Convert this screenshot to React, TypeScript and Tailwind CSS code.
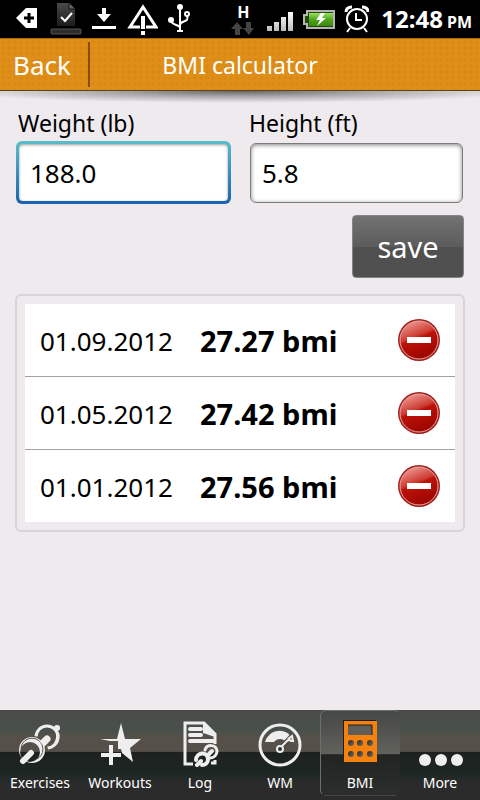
import React, { useState } from "react";

type Entry = {
    id: number;
    date: string;
    bmi: string;
};

type Tab = {
    name: string;
    icon: React.ReactNode;
};

const initialEntries: Entry[] = [
    { id: 1, date: "01.09.2012", bmi: "27.27" },
    { id: 2, date: "01.05.2012", bmi: "27.42" },
    { id: 3, date: "01.01.2012", bmi: "27.56" },
];

const StatusBar = () => (
    <div className="flex h-[38px] items-center justify-between bg-black pl-4 pr-2 text-white">
        <div className="flex items-center gap-2">
            <svg width="22" height="38" viewBox="0 0 22 38">
                <path d="M0 18 10 8h11v20H10z" fill="#fff" />
                <path d="M8 18h10M13 13v10" stroke="#000" strokeWidth="3" />
            </svg>
            <svg width="36" height="38" viewBox="0 0 36 38">
                <defs>
                    <linearGradient id="doc" x1="0" y1="0" x2="0" y2="1">
                        <stop offset="0" stopColor="#4a4a4a" />
                        <stop offset="1" stopColor="#1c1c1c" />
                    </linearGradient>
                </defs>
                <path d="M11 3h12l6 6v17H11z" fill="url(#doc)" />
                <path d="M23 3v6h6" fill="#666" stroke="#111" />
                <path d="m15 17 4 4 7-8" fill="none" stroke="#fff" strokeWidth="2" />
                <rect x="5" y="29" width="30" height="5" rx="1" fill="#2c2c2c" stroke="#555" />
            </svg>
            <svg width="28" height="38" viewBox="0 0 28 38">
                <path d="M12 8h4v6h5l-7 8-7-8h5zM2 26h24v3H2z" fill="#fff" />
            </svg>
            <svg width="32" height="38" viewBox="0 0 32 38">
                <path d="M17 7 30 27H4z" fill="none" stroke="#fff" strokeWidth="3" />
                <path d="M14 15h6v15h-6z" fill="#000" />
                <path d="M17 16v13M17 31v4" stroke="#fff" strokeWidth="4" />
            </svg>
            <svg width="26" height="38" viewBox="0 0 26 38">
                <g fill="none" stroke="#fff" strokeWidth="2">
                    <path d="M14 7v24M5 20c0 6 9 4 9 8M21 16c3 7-7 4-7 9" />
                    <circle cx="21" cy="14" r="2" />
                </g>
                <circle cx="14" cy="7" r="3" fill="#fff" />
                <circle cx="5" cy="20" r="3" fill="#fff" />
                <path d="M11 30h6v2h-6z" fill="#fff" />
            </svg>
        </div>
        <div className="flex items-center gap-2">
            <div className="flex w-6 flex-col items-center">
                <span className="text-base leading-5 font-bold">H</span>
                <svg width="24" height="14" viewBox="0 0 24 14">
                    <path d="M6 0 0 7h4v6h5V7h3zM15 0v6h-3l6 7 5-7h-3V0z" fill="#444" />
                </svg>
            </div>
            <svg width="30" height="38" viewBox="0 0 30 38">
                <defs>
                    <linearGradient id="signal" x1="0" y1="0" x2="0" y2="1">
                        <stop offset="0" stopColor="#fff" />
                        <stop offset="1" stopColor="#bbb" />
                    </linearGradient>
                </defs>
                <path d="M4 26h5v5H4zM11 22h5v9h-5zM18 17h5v14h-5zM25 12h5v19h-5z" fill="url(#signal)" />
            </svg>
            <svg width="34" height="38" viewBox="0 0 34 38">
                <defs>
                    <linearGradient id="battery" x1="0" y1="0" x2="0" y2="1">
                        <stop offset="0" stopColor="#9ade62" />
                        <stop offset="0.5" stopColor="#4fa51c" />
                        <stop offset="1" stopColor="#3c8810" />
                    </linearGradient>
                </defs>
                <path d="M6 11h27v17H6v-4H3v-9h3z" fill="#244c0c" stroke="#b5b5b5" strokeWidth="2" />
                <rect x="8" y="13" width="24" height="13" fill="url(#battery)" />
                <path d="M20 13l-5 7h4l-3 6 9-8h-4l3-5z" fill="#fff" />
            </svg>
            <svg width="26" height="38" viewBox="0 0 26 38">
                <g fill="none" stroke="#fff" strokeWidth="2">
                    <circle cx="14" cy="19" r="10" />
                    <path d="M13 13v7h6M7 28l-3 4M21 28l3 4" />
                    <path d="M3 12c0-3 2-5 6-5M25 12c0-3-2-5-6-5" strokeWidth="3" />
                </g>
            </svg>
            <div className="flex items-baseline gap-1 pl-1 font-bold">
                <span className="text-2xl leading-9">12:48</span>
                <span className="text-base">PM</span>
            </div>
        </div>
    </div>
);

const DeleteIcon = ({ id }: { id: number }) => (
    <svg width="44" height="44" viewBox="0 0 44 44" className="block">
        <defs>
            <linearGradient id={`red-${id}`} x1="0.2" y1="0" x2="0.6" y2="1">
                <stop offset="0" stopColor="#f0a09a" />
                <stop offset="0.42" stopColor="#cc3a30" />
                <stop offset="0.48" stopColor="#bc1208" />
                <stop offset="1" stopColor="#9c0500" />
            </linearGradient>
        </defs>
        <circle cx="22" cy="22" r="21" fill="#a01f1c" />
        <circle cx="22" cy="22" r="19" fill={`url(#red-${id})`} stroke="#e8a8a4" />
        <rect x="10" y="19" width="24" height="6" fill="#fff" />
    </svg>
);

const Dumbbell = ({ id }: { id: string }) => (
    <g fill="#eee">
        <mask id={id}>
            <rect x="-4" y="-4" width="60" height="60" fill="#fff" />
            <circle cx="17" cy="32" r="15" fill="#000" />
        </mask>
        <g mask={`url(#${id})`}>
            <circle cx="31" cy="18" r="11" fill="none" stroke="#eee" strokeWidth="3" />
            <path d="M43 13c2 8-3 16-11 17 5-3 9-9 8-15z" />
            <circle cx="41" cy="9" r="3" />
            <path d="m27 24 4-4" stroke="#eee" strokeWidth="7" strokeLinecap="round" />
        </g>
        <path
            fillRule="evenodd"
            d="M16 18a13 13 0 1 1 0 26a13 13 0 1 1 0-26zM14 23a10 10 0 1 0 0 20a10 10 0 1 0 0-20z"
        />
        <path d="M5 29a11 11 0 1 1 16 11" fill="none" stroke="#555" strokeWidth="1" />
        <path d="m26 25 3-3" stroke="#eee" strokeWidth="7" />
        <path d="m7 42 8-8" stroke="#eee" strokeWidth="6" strokeLinecap="round" />
    </g>
);

const ExercisesIcon = () => (
    <svg width="48" height="48" viewBox="0 0 48 48">
        <Dumbbell id="dumbbell-large" />
    </svg>
);

const WorkoutsIcon = () => (
    <svg width="48" height="48" viewBox="0 0 48 48">
        <path d="m25 4 4 16h16L34 29l3 14-11-9-1-4h-3v-8h-8L4 20h17z" fill="#eee" />
        <path d="M15 26v20M5 36h20" stroke="#eee" strokeWidth="4" />
    </svg>
);

const LogIcon = () => (
    <svg width="48" height="48" viewBox="0 0 48 48">
        <path d="M17 45H9V4h19l11 11v10" fill="none" stroke="#eee" strokeWidth="3" />
        <path d="M27 3v11l12 4v-3z" fill="#eee" />
        <path d="M14 10h11M14 16h11M14 22h23" stroke="#eee" strokeWidth="4" strokeLinecap="round" />
        <path d="M35 44h4v-3" fill="none" stroke="#eee" strokeWidth="3" />
        <g fill="none" stroke="#eee" strokeLinecap="round">
            <path d="M29 31c2-6 11-6 12 1 0 4-3 7-7 7" strokeWidth="3" />
            <path d="m32 36 4-4" strokeWidth="4" />
            <path d="M20 41c0-8 12-9 12-1 0 4-3 6-6 6" strokeWidth="4" />
            <path d="m21 46 4-4" strokeWidth="4" />
        </g>
    </svg>
);

const GaugeIcon = () => (
    <svg width="48" height="48" viewBox="0 0 48 48">
        <circle cx="24" cy="26" r="20" fill="none" stroke="#eee" strokeWidth="3" />
        <path d="M9 23c5-15 24-15 29 0h-8c-3-4-9-4-12 0z" fill="#eee" />
        <path d="m24 30 12-13" stroke="#4a4843" strokeWidth="5" />
        <path d="m25 28 9-9M32 20l4-3 1 5-5-1" stroke="#eee" strokeWidth="2" fill="none" />
        <circle cx="24" cy="30" r="3" fill="#333" stroke="#eee" strokeWidth="2" />
    </svg>
);

const CalculatorIcon = () => (
    <svg width="48" height="48" viewBox="0 0 48 48">
        <defs>
            <linearGradient id="key" x1="0" y1="0" x2="1" y2="1">
                <stop offset="0" stopColor="#2a2826" />
                <stop offset="1" stopColor="#706c64" />
            </linearGradient>
        </defs>
        <path d="M7 1h33v42H7z" fill="#201c18" />
        <path d="M8 2h33v41H8z" fill="#f5810f" />
        <rect x="12" y="6" width="24" height="10" fill="#5d5e5a" />
        <path d="M12 6h24v10" fill="none" stroke="#201c18" />
        {[24, 35].map((y) =>
            [15, 24, 34].map((x) => <circle key={`${x}-${y}`} cx={x} cy={y} r="3" fill="url(#key)" />)
        )}
    </svg>
);

const MoreIcon = () => (
    <svg width="48" height="48" viewBox="0 0 48 48" fill="#eee">
        <ellipse cx="9" cy="41" rx="6" ry="6" />
        <ellipse cx="25" cy="41" rx="6" ry="6" />
        <ellipse cx="41" cy="41" rx="6" ry="6" />
    </svg>
);

const tabs: Tab[] = [
    { name: "Exercises", icon: <ExercisesIcon /> },
    { name: "Workouts", icon: <WorkoutsIcon /> },
    { name: "Log", icon: <LogIcon /> },
    { name: "WM", icon: <GaugeIcon /> },
    { name: "BMI", icon: <CalculatorIcon /> },
    { name: "More", icon: <MoreIcon /> },
];

const App: React.FC = () => {
    const [weight, setWeight] = useState("188.0");
    const [height, setHeight] = useState("5.8");
    const [entries, setEntries] = useState(initialEntries);
    const [activeTab, setActiveTab] = useState("BMI");

    // weight in pounds, height in feet
    const handleSave = (e: React.FormEvent) => {
        e.preventDefault();
        const inches = parseFloat(height) * 12;
        const bmi = (parseFloat(weight) * 703) / (inches * inches);
        if (!isFinite(bmi)) return;
        const now = new Date();
        const day = String(now.getDate()).padStart(2, "0");
        const month = String(now.getMonth() + 1).padStart(2, "0");
        setEntries([{ id: now.getTime(), date: `${day}.${month}.${now.getFullYear()}`, bmi: bmi.toFixed(2) }, ...entries]);
    };

    return (
        <div className="flex min-h-screen flex-col bg-[#eeeaee] font-['Noto_Sans','Open_Sans',sans-serif] text-black">
            <StatusBar />
            <header className="grid h-[53px] grid-cols-[90px_1fr_90px] items-center border-t border-b border-t-[#a86708] border-b-[#5c4414] bg-[#df8f18] bg-[radial-gradient(#d88814_1px,transparent_2px)] bg-[size:6px_6px] text-white">
                <button type="button" className="h-[45px] border-r-2 border-[#8f4a08] pr-1 text-[26px] leading-8">
                    Back
                </button>
                <h1 className="text-center text-[23px] leading-8">BMI calculator</h1>
            </header>
            <div className="h-3 bg-[radial-gradient(60%_100%_at_50%_0%,#66636a,#aaa7ab_45%,#eeeaee)]" />

            <main className="flex-1 px-4 pt-1">
                <form onSubmit={handleSave}>
                    <div className="grid grid-cols-2 gap-[18px]">
                        <div>
                            <label htmlFor="weight" className="block pl-[2px] text-[23px] leading-8">
                                Weight (lb)
                            </label>
                            <div className="mt-[2px] rounded-md bg-linear-to-b from-[#5bbec8] to-[#1a62ae] p-[3px]">
                                <input
                                    id="weight"
                                    type="text"
                                    value={weight}
                                    onChange={(e) => setWeight(e.target.value)}
                                    className="block h-[57px] w-full rounded-sm bg-white px-[11px] text-[26px] shadow-[inset_0_1px_3px_rgba(0,0,0,0.4)] outline-none"
                                />
                            </div>
                        </div>
                        <div>
                            <label htmlFor="height" className="block text-[23px] leading-8">
                                Height (ft)
                            </label>
                            <div className="mt-1 px-px">
                                <input
                                    id="height"
                                    type="text"
                                    value={height}
                                    onChange={(e) => setHeight(e.target.value)}
                                    className="block h-[60px] w-full rounded-md border border-[#7c7c7c] bg-white px-[11px] text-[26px] shadow-[inset_0_1px_4px_rgba(0,0,0,0.5)] outline-none"
                                />
                            </div>
                        </div>
                    </div>
                    <div className="mt-[11px] flex justify-end">
                        <button
                            type="submit"
                            className="h-[63px] w-28 rounded-sm border border-[#858585] bg-linear-to-b from-[#737373] from-0% via-[#5c5c5c] via-50% to-[#505050] to-50% text-[29px] leading-8 text-white"
                        >
                            save
                        </button>
                    </div>
                </form>

                <div className="-mx-px mt-4 rounded-md border-2 border-[#d8d5d8] p-2">
                    <ul className="bg-white">
                        {entries.map((entry) => (
                            <li
                                key={entry.id}
                                className="flex h-[73px] items-center border-b border-[#a2a2a2] pr-[14px] pl-[15px] text-[26px] last:h-[72px] last:border-b-0"
                            >
                                <span className="w-40 pt-[2px]">{entry.date}</span>
                                <span className="flex-1 pt-px text-[29px] font-bold">{entry.bmi} bmi</span>
                                <button
                                    type="button"
                                    aria-label={`Delete ${entry.date}`}
                                    onClick={() => setEntries(entries.filter((item) => item.id !== entry.id))}
                                >
                                    <DeleteIcon id={entry.id} />
                                </button>
                            </li>
                        ))}
                    </ul>
                </div>
            </main>

            <nav className="grid h-[90px] grid-cols-6 bg-[linear-gradient(#4a4b49,#48504b_22%,#565049_30%,#56504a_46%,#1d211e_47%,#1c2724_70%,#2a2b2a_80%,#2b2b2b)] text-white">
                {tabs.map((tab) => (
                    <button
                        key={tab.name}
                        type="button"
                        onClick={() => setActiveTab(tab.name)}
                        className={`flex flex-col items-center pt-2 ${
                            activeTab === tab.name
                                ? "mb-2 rounded-md border border-t-[#6c6f6c] border-r-transparent border-b-transparent border-l-[#6c6f6c] bg-[linear-gradient(#454746,#62625d_51%,#222422_52%,#2c2e2d)]"
                                : "border border-transparent"
                        }`}
                    >
                        {tab.icon}
                        <span className="mt-1 text-sm leading-6">{tab.name}</span>
                    </button>
                ))}
            </nav>
        </div>
    );
};

export default App;
